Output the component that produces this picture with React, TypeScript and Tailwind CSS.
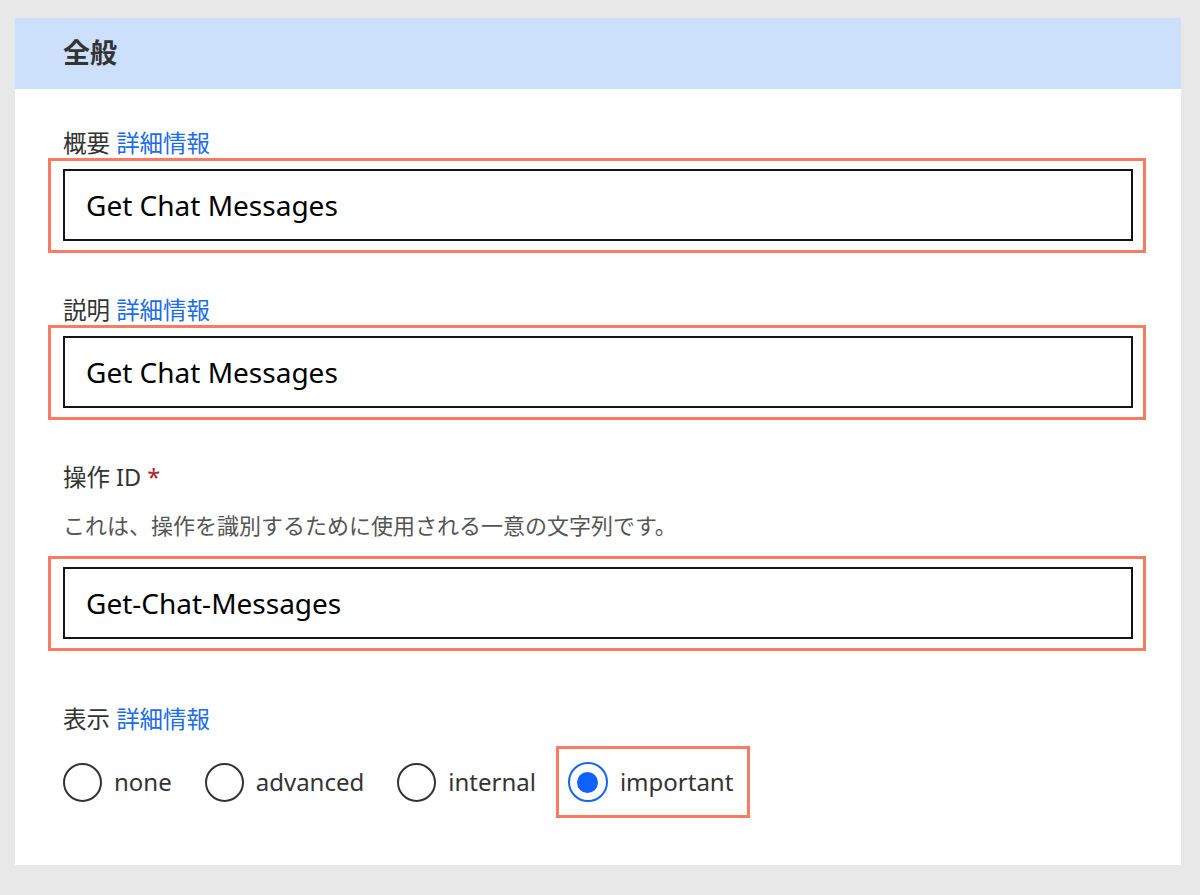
import type { ReactNode } from "react";

const font = { fontFamily: '"Noto Sans", "Noto Sans CJK JP", sans-serif' };

function Label({ children }: { children: ReactNode }) {
  return <p className="text-[23.5px] leading-[30px] text-[#333]">{children}</p>;
}

function More() {
  return <span className="text-[#1b6ce6]">詳細情報</span>;
}

function Field({ value }: { value: string }) {
  return (
    <div className="-ml-[15px] -mr-[13px] border-[3px] border-[#fa7a63] pb-[9px] pl-3 pr-[10px] pt-2">
      <div className="flex h-[72px] items-center border-2 border-[#141414] bg-white pl-[21px] text-[28px] text-black">
        {value}
      </div>
    </div>
  );
}

function Radio({ label, checked = false }: { label: string; checked?: boolean }) {
  return (
    <div className="flex items-center gap-[12px]">
      {checked ? (
        <span className="flex h-[40px] w-[40px] items-center justify-center rounded-full border-2 border-[#1565f5]">
          <span className="h-[21px] w-[21px] rounded-full bg-[#0f62fe]" />
        </span>
      ) : (
        <span className="h-[39px] w-[39px] rounded-full border-2 border-[#333]" />
      )}
      <span className="text-[24px] text-[#333]">{label}</span>
    </div>
  );
}

export default function App() {
  return (
    <div className="min-h-[895px] bg-[#e8e8e8] pl-[15px] pr-[19px] pt-[18px]" style={font}>
      <section className="h-[847px] bg-white">
        <header className="flex h-[71px] items-center bg-[#cce0fc] pl-[48px]">
          <h2 className="text-[27px] font-bold text-[#333]">全般</h2>
        </header>
        <div className="pl-[48px] pr-[48px]">
          <div className="mt-[39px]">
            <Label>
              概要 <More />
            </Label>
            <Field value="Get Chat Messages" />
          </div>
          <div className="mt-[42px]">
            <Label>
              説明 <More />
            </Label>
            <Field value="Get Chat Messages" />
          </div>
          <div className="mt-[42px]">
            <Label>
              操作 ID <span className="text-[#a4262c]">*</span>
            </Label>
            <p className="mt-[18px] text-[22px] leading-[30px] text-[#555]">
              これは、操作を識別するために使用される一意の文字列です。
            </p>
            <div className="mt-[16px]">
              <Field value="Get-Chat-Messages" />
            </div>
          </div>
          <div className="mt-[53px]">
            <Label>
              表示 <More />
            </Label>
            <div className="mt-[12px] flex items-center">
              <Radio label="none" />
              <div className="ml-[33px]">
                <Radio label="advanced" />
              </div>
              <div className="ml-[33px]">
                <Radio label="internal" />
              </div>
              <div className="ml-[20px] flex h-[72px] items-center border-[3px] border-[#fa7a63] pl-[9px] pr-[14px]">
                <Radio label="important" checked />
              </div>
            </div>
          </div>
        </div>
      </section>
    </div>
  );
}
